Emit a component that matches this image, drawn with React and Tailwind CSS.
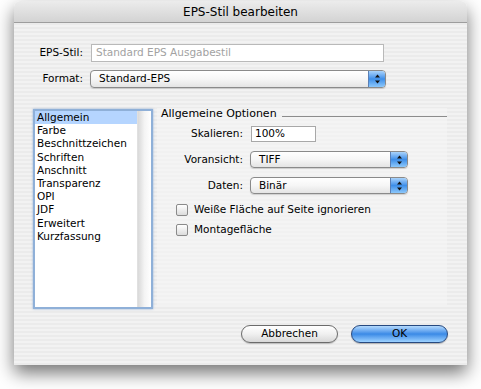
const items = ['Allgemein', 'Farbe', 'Beschnittzeichen', 'Schriften', 'Anschnitt', 'Transparenz', 'OPI', 'JDF', 'Erweitert', 'Kurzfassung']

function Arrows() {
  return (
    <svg width="7" height="10" viewBox="0 0 7 10">
      <path d="M3.5 0.5 L6 3.5 L1 3.5 Z" fill="#111" />
      <path d="M3.5 9.5 L6 6.5 L1 6.5 Z" fill="#111" />
    </svg>
  )
}

function Select({ value, w, h = 'h-[18px]' }) {
  return (
    <div className={`${w} ${h} flex rounded-[4px] border border-[#8a8a8a] bg-gradient-to-b from-white via-[#f6f6f6] to-[#e4e4e4] shadow-[0_1px_1px_rgba(0,0,0,0.15)] overflow-hidden`}>
      <div className="flex-1 flex items-center pl-[8px] text-black">{value}</div>
      <div className="w-[17px] flex items-center justify-center bg-gradient-to-b from-[#a9d3fb] via-[#3d8ee8] to-[#8cc8fb] border-l border-[#5a7fb5]">
        <Arrows />
      </div>
    </div>
  )
}

function Check({ label }) {
  return (
    <div className="flex items-center h-[12px]">
      <div className="w-[12px] h-[12px] rounded-[2px] border border-[#8a8a8a] bg-gradient-to-b from-white to-[#dcdcdc]" />
      <span className="ml-[6px]">{label}</span>
    </div>
  )
}

export default function App() {
  return (
    <div className="w-[481px] h-[389px] bg-white overflow-hidden text-[10.5px] text-black" style={{ fontFamily: '"DejaVu Sans", sans-serif' }}>
      <div className="ml-[14px] mt-[1px] w-[453px] h-[364px] rounded-t-[6px] shadow-[0_8px_18px_rgba(0,0,0,0.55)] flex flex-col overflow-hidden">
        <div className="h-[22px] shrink-0 flex items-center justify-center text-[12px] bg-gradient-to-b from-[#ececec] to-[#d3d3d3] border-b border-[#9d9d9d]">
          EPS-Stil bearbeiten
        </div>
        <div className="flex-1 bg-[image:repeating-linear-gradient(0deg,#ebebeb_0px,#ebebeb_2px,#f2f2f2_2px,#f2f2f2_4px)] pt-[21px]">
          <div className="flex items-center h-[18px]">
            <div className="w-[69px] text-right">EPS-Stil:</div>
            <div className="ml-[8px] w-[293px] h-[18px] bg-white border border-[#b9b9b9] flex items-center pl-[4px] text-[#a2a2a2]">Standard EPS Ausgabestil</div>
          </div>
          <div className="flex items-center h-[18px] mt-[8px]">
            <div className="w-[69px] text-right">Format:</div>
            <div className="ml-[7px]"><Select value="Standard-EPS" w="w-[296px]" /></div>
          </div>

          <div className="flex items-start mt-[20px] pl-[19px]">
            <div className="mt-[1px] w-[120px] h-[200px] border-2 border-[#8fb0d8] bg-white flex shadow-[0_0_2px_rgba(80,130,200,0.6)]">
              <div className="w-[102px] leading-[13.2px]">
                {items.map((it, i) => (
                  <div key={it} className={`pl-[2px] h-[13.2px] ${i === 0 ? 'bg-[#b5d5ff]' : ''}`}>{it}</div>
                ))}
              </div>
              <div className="flex-1 bg-gradient-to-r from-[#d9d9d9] via-[#f4f4f4] to-white border-l border-[#e0e0e0]" />
            </div>

            <div className="ml-[4px] w-[290px] h-[197px] bg-[#f5f5f5]/60 flex flex-col">
              <div className="flex items-center h-[13px]">
                <span className="pl-[4px] text-[11px]">Allgemeine Optionen</span>
                <div className="flex-1 ml-[5px] mt-[4px] h-px bg-[#8c8c8c]" />
              </div>
              <div className="flex items-center h-[16px] mt-[5px]">
                <div className="w-[86px] text-right">Skalieren:</div>
                <div className="ml-[8px] w-[65px] h-[16px] bg-white border border-[#a8a8a8] flex items-center pl-[3px]">100%</div>
              </div>
              <div className="flex items-center mt-[9px]">
                <div className="w-[86px] text-right">Voransicht:</div>
                <div className="ml-[7px]"><Select value="TIFF" w="w-[158px]" h="h-[17px]" /></div>
              </div>
              <div className="flex items-center mt-[9px]">
                <div className="w-[86px] text-right">Daten:</div>
                <div className="ml-[7px]"><Select value="Binär" w="w-[158px]" h="h-[17px]" /></div>
              </div>
              <div className="pl-[19px] mt-[10px] flex flex-col gap-[8px]">
                <Check label="Weiße Fläche auf Seite ignorieren" />
                <Check label="Montagefläche" />
              </div>
            </div>
          </div>

          <div className="flex justify-end gap-[13px] pr-[19px] mt-[16px]">
            <button className="w-[97px] h-[18px] rounded-full border border-[#6b6b6b] bg-gradient-to-b from-white via-[#f0f0f0] to-[#d8d8d8] text-[10.5px] shadow-[0_1px_1px_rgba(0,0,0,0.2)]">Abbrechen</button>
            <button className="w-[97px] h-[18px] rounded-full border border-[#27497f] bg-gradient-to-b from-[#b4dafd] via-[#3a8ae6] to-[#9dd2ff] text-[10.5px] shadow-[0_1px_1px_rgba(0,0,0,0.25)]">OK</button>
          </div>
        </div>
      </div>
    </div>
  )
}
